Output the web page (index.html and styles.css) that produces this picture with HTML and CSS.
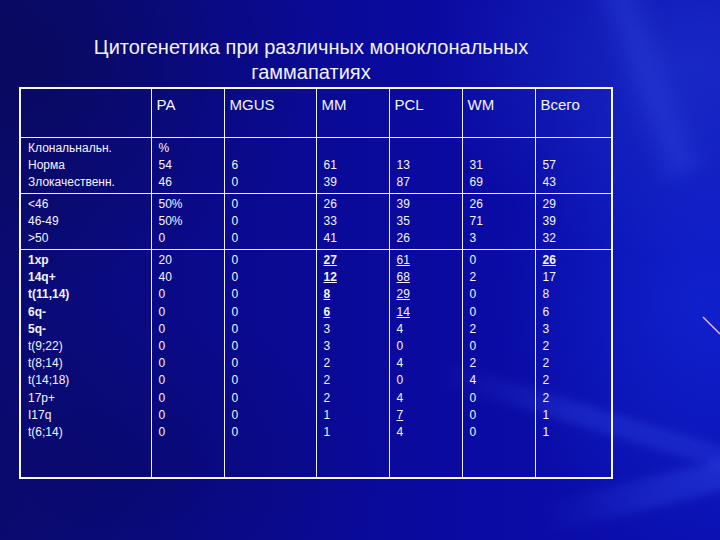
FILE: index.html
```html
<!DOCTYPE html>
<html lang="ru">
<head>
<meta charset="utf-8">
<title>Цитогенетика при различных моноклональных гаммапатиях</title>
<link rel="stylesheet" href="styles.css">
</head>
<body>
<div class="slide">
  <div class="streak streak-a"></div>
  <div class="streak streak-b"></div>
  <div class="streak streak-c"></div>
  <svg class="spark" width="20" height="24" viewBox="0 0 20 24"><line x1="2" y1="2" x2="19" y2="19" stroke="#e6b8ff" stroke-width="1.4"/></svg>
  <h1 class="title">Цитогенетика при различных моноклональных<br>гаммапатиях</h1>
  <table class="grid">
    <colgroup>
      <col class="c1"><col class="c2"><col class="c3"><col class="c4"><col class="c5"><col class="c6"><col class="c7">
    </colgroup>
    <tr class="head">
      <th></th><th>PA</th><th>MGUS</th><th>MM</th><th>PCL</th><th>WM</th><th>Всего</th>
    </tr>
    <tr class="r2">
      <td>Клональнальн.<br>Норма<br>Злокачественн.</td>
      <td>%<br>54<br>46</td>
      <td>&nbsp;<br>6<br>0</td>
      <td>&nbsp;<br>61<br>39</td>
      <td>&nbsp;<br>13<br>87</td>
      <td>&nbsp;<br>31<br>69</td>
      <td>&nbsp;<br>57<br>43</td>
    </tr>
    <tr class="r3">
      <td>&lt;46<br>46-49<br>&gt;50</td>
      <td>50%<br>50%<br>0</td>
      <td>0<br>0<br>0</td>
      <td>26<br>33<br>41</td>
      <td>39<br>35<br>26</td>
      <td>26<br>71<br>3</td>
      <td>29<br>39<br>32</td>
    </tr>
    <tr class="r4">
      <td><b>1xp</b><br><b>14q+</b><br><b>t(11,14)</b><br><b>6q-</b><br><b>5q-</b><br>t(9;22)<br>t(8;14)<br>t(14;18)<br>17p+<br>I17q<br>t(6;14)</td>
      <td>20<br>40<br>0<br>0<br>0<br>0<br>0<br>0<br>0<br>0<br>0</td>
      <td>0<br>0<br>0<br>0<br>0<br>0<br>0<br>0<br>0<br>0<br>0</td>
      <td><b class="u">27</b><br><b class="u">12</b><br><b class="u">8</b><br><b class="u">6</b><br>3<br>3<br>2<br>2<br>2<br>1<br>1</td>
      <td><span class="u">61</span><br><span class="u">68</span><br><span class="u">29</span><br><span class="u">14</span><br>4<br>0<br>4<br>0<br>4<br><span class="u">7</span><br>4</td>
      <td>0<br>2<br>0<br>0<br>2<br>0<br>2<br>4<br>0<br>0<br>0</td>
      <td><b class="u">26</b><br>17<br>8<br>6<br>3<br>2<br>2<br>2<br>2<br>1<br>1</td>
    </tr>
  </table>
</div>
</body>
</html>
```

FILE: styles.css
```css
html, body {
  margin: 0;
  padding: 0;
  background: #0a0a8a;
}

.slide {
  position: relative;
  width: 720px;
  height: 540px;
  overflow: hidden;
  font-family: "Liberation Sans", Arial, sans-serif;
  color: #f4f4ff;
  background:
    radial-gradient(ellipse 260px 200px at 690px 60px, rgba(40, 70, 220, 0.45), rgba(40, 70, 220, 0) 100%),
    radial-gradient(ellipse 200px 260px at 700px 300px, rgba(20, 50, 230, 0.5), rgba(20, 50, 230, 0) 100%),
    radial-gradient(ellipse 280px 220px at 40px 60px, rgba(8, 8, 70, 0.45), rgba(8, 8, 70, 0) 100%),
    radial-gradient(ellipse 260px 160px at 120px 470px, rgba(8, 8, 90, 0.4), rgba(8, 8, 90, 0) 100%),
    linear-gradient(90deg, #0a0a72 0%, #0a0a8e 30%, #0a0aa0 60%, #0b10b2 100%);
}

.streak {
  position: absolute;
  pointer-events: none;
}

.streak-a {
  left: 440px;
  top: 360px;
  width: 360px;
  height: 22px;
  transform: rotate(17deg);
  transform-origin: 0 0;
  background: linear-gradient(90deg, rgba(70, 100, 255, 0), rgba(70, 100, 255, 0.22) 40%, rgba(70, 100, 255, 0.18) 100%);
  filter: blur(4px);
}

.streak-b {
  left: 540px;
  top: 505px;
  width: 240px;
  height: 30px;
  transform: rotate(-14deg);
  transform-origin: 0 0;
  background: linear-gradient(90deg, rgba(70, 100, 255, 0), rgba(70, 100, 255, 0.22) 50%, rgba(70, 100, 255, 0.3) 100%);
  filter: blur(5px);
}

.streak-c {
  left: 620px;
  top: -20px;
  width: 60px;
  height: 200px;
  transform: rotate(-20deg);
  background: linear-gradient(90deg, rgba(60, 90, 240, 0), rgba(60, 90, 240, 0.25), rgba(60, 90, 240, 0));
  filter: blur(6px);
}

.spark {
  position: absolute;
  left: 701px;
  top: 315px;
}

.title {
  position: relative;
  margin: 0;
  padding-top: 35px;
  width: 622px;
  text-align: center;
  font-size: 20px;
  font-weight: normal;
  line-height: 25px;
  letter-spacing: 0;
  color: #f2f2ff;
}

.grid {
  position: relative;
  margin: 2px 0 0 19px;
  width: 592px;
  table-layout: fixed;
  border-collapse: collapse;
  border: 2px solid #f6f6ff;
  font-size: 12px;
  line-height: 17.2px;
}

.c1 { width: 131px; }
.c2 { width: 73px; }
.c3 { width: 92px; }
.c4 { width: 73px; }
.c5 { width: 73px; }
.c6 { width: 73px; }
.c7 { width: 77px; }

.grid th,
.grid td {
  border: 1px solid #eeeeff;
  vertical-align: top;
  text-align: left;
  overflow: hidden;
  white-space: nowrap;
}

.grid th {
  height: 41px;
  padding: 7px 4px 0 5px;
  font-size: 15px;
  font-weight: normal;
  line-height: 18px;
}

.grid td {
  padding: 2px 4px 0 7px;
}

.r2 td { height: 53px; }
.r3 td { height: 53px; }
.r4 td { height: 225px; }

.u {
  text-decoration: underline;
}
```
